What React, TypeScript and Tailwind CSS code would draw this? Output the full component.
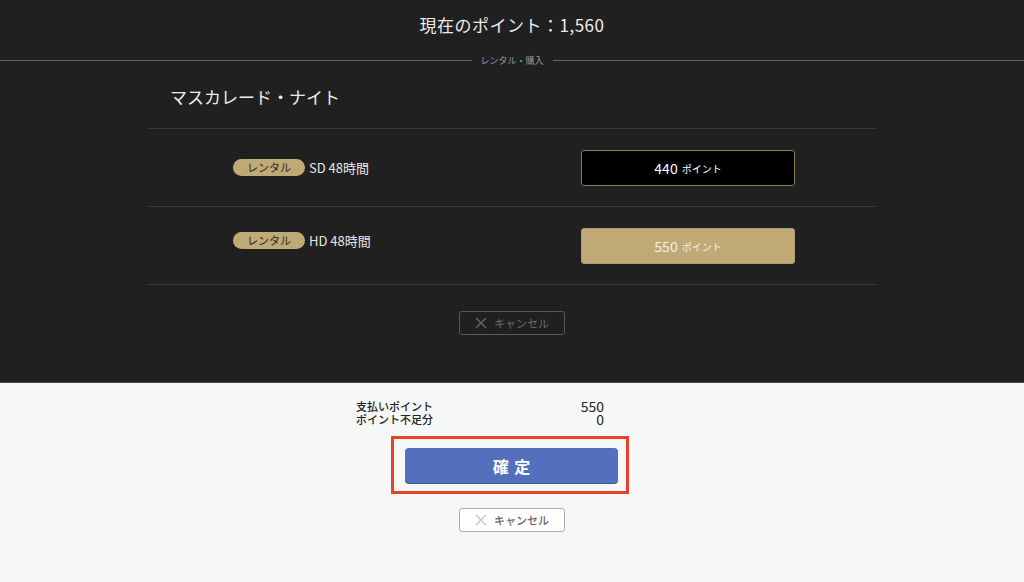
const font = { fontFamily: '"Noto Sans CJK JP", "Noto Sans", sans-serif' }

function CrossIcon({ className }: { className: string }) {
  return (
    <svg viewBox="0 0 12 12" className={className} fill="none" stroke="currentColor" strokeWidth={1.2}>
      <path d="M1 1 L11 11 M11 1 L1 11" />
    </svg>
  )
}

function PlanRow({ label, price, selected, offset }: { label: string; price: number; selected: boolean; offset: string }) {
  return (
    <div className="flex h-[78px] border-b border-[#3a3a3a]">
      <div className={`w-[364px] pl-[85px] ${offset} flex items-start`}>
        <span className="w-[72px] h-[17px] rounded-full bg-[#bfa977] text-[#2e281e] text-[11px] leading-[17px] text-center">
          レンタル
        </span>
        <span className="ml-[4px] text-[13px] leading-[17px] text-[#e6e6e6]">{label}</span>
      </div>
      <div className="pl-[69px] pt-[21px]">
        {selected ? (
          <button className="w-[214px] h-[36px] rounded-[3px] bg-[#bfa977] border border-[#b39d6c] text-[#f6f1e4] flex items-center justify-center gap-[4px]">
            <span className="text-[14px]">{price}</span>
            <span className="text-[10px]">ポイント</span>
          </button>
        ) : (
          <button className="w-[214px] h-[36px] rounded-[3px] bg-black border border-[#8b7a52] text-white flex items-center justify-center gap-[4px]">
            <span className="text-[14px]">{price}</span>
            <span className="text-[10px]">ポイント</span>
          </button>
        )}
      </div>
    </div>
  )
}

export default function App() {
  return (
    <div className="w-[1024px] h-[582px] overflow-hidden flex flex-col" style={font}>
      {/* 上部：ダーク */}
      <div className="h-[383px] bg-[#202020] border-b border-[#4a4a4a]">
        <div className="h-[60px] flex items-center justify-center pb-[10px]">
          <h1 className="text-[17px] text-[#ececec] tracking-[0.5px]">現在のポイント：1,560</h1>
        </div>
        <div className="flex items-center h-px">
          <div className="flex-1 h-px bg-[#5b6564]" />
          <span className="px-[9px] text-[9px] text-[#9a9a9a] leading-none">レンタル・購入</span>
          <div className="flex-1 h-px bg-[#5b6564]" />
        </div>

        <div className="w-[728px] mx-auto">
          <div className="h-[68px] pl-[22px] pt-[26px] border-b border-[#3a3a3a]">
            <h2 className="text-[17px] leading-[20px] text-[#ececec]">マスカレード・ナイト</h2>
          </div>
          <PlanRow label="SD 48時間" price={440} selected={false} offset="pt-[30px]" />
          <PlanRow label="HD 48時間" price={550} selected={true} offset="pt-[25px]" />
          <div className="flex justify-center pt-[26px]">
            <button className="w-[106px] h-[24px] rounded-[3px] border border-[#555a5a] flex items-center justify-center gap-[7px] text-[#6c6c6c]">
              <CrossIcon className="w-[12px] h-[12px]" />
              <span className="text-[11px]">キャンセル</span>
            </button>
          </div>
        </div>
      </div>

      {/* 下部：ライト */}
      <div className="flex-1 bg-[#f6f8f7]">
        <div className="ml-[356px] w-[248px] pt-[17px]">
          <div className="flex justify-between items-end h-[12px]">
            <span className="text-[11px] leading-[11px] text-[#222] font-medium">支払いポイント</span>
            <span className="text-[14px] leading-[12px] text-[#222]">550</span>
          </div>
          <div className="flex justify-between items-end h-[13px]">
            <span className="text-[11px] leading-[11px] text-[#222] font-medium">ポイント不足分</span>
            <span className="text-[14px] leading-[12px] text-[#222]">0</span>
          </div>
        </div>
        <div className="flex justify-center mt-[11px] pr-[4px]">
          <div className="w-[238px] h-[58px] border-[3px] border-[#e8402a] pl-[11px] pt-[9px]">
            <button className="w-[213px] h-[35px] rounded-[4px] bg-[#5470bd] shadow-[0_1px_0_#3d5394] text-white text-[16px] font-bold tracking-[0.35em] pl-[0.35em]">
              確定
            </button>
          </div>
        </div>
        <div className="flex justify-center pt-[14px]">
          <button className="w-[106px] h-[24px] rounded-[3px] bg-white border border-[#a7adad] flex items-center justify-center gap-[7px] text-[#666]">
            <CrossIcon className="w-[12px] h-[12px] text-[#c4c4c4]" />
            <span className="text-[11px] font-medium">キャンセル</span>
          </button>
        </div>
      </div>
    </div>
  )
}
